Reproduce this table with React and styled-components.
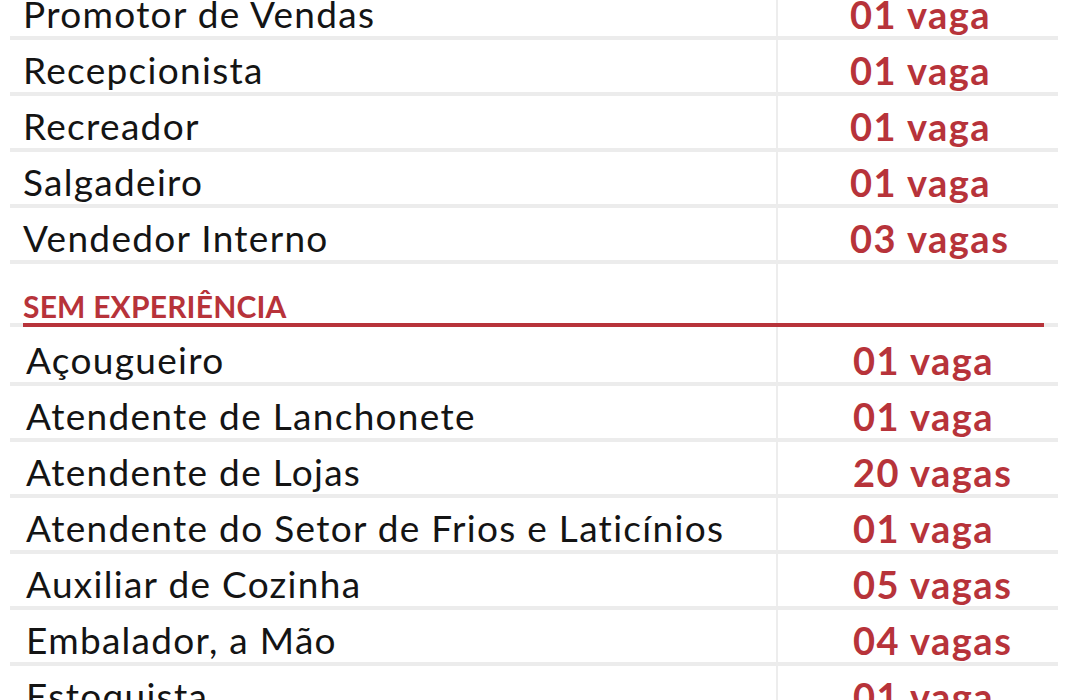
import styled, { createGlobalStyle } from "styled-components";

const Global = createGlobalStyle`
  html, body { margin: 0; padding: 0; background: #fff; overflow: hidden; }
  body { font-family: Lato, "Open Sans", sans-serif; }
`;

const Page = styled.div`
  width: 1080px;
  height: 700px;
  overflow: hidden;
`;

const Table = styled.div`
  margin: -16px 0 0 10px;
  width: 1048px;
  background: linear-gradient(#ededed, #ededed) 766px 0 / 2px 100% no-repeat;
`;

const Section = styled.div`
  padding-top: ${(p) => p.offset || 0}px;
`;

const Row = styled.div`
  display: grid;
  grid-template-columns: ${(p) => 827 - (p.indent || 0) + (p.countIndent || 0)}px 1fr;
  height: 56px;
  box-sizing: border-box;
  padding: 12px 0 4px ${(p) => 13 + (p.indent || 0)}px;
  border-bottom: 4px solid #ececec;
`;

const Job = styled.div`
  font-size: 37px;
  line-height: 36px;
  color: #141414;
  letter-spacing: 1.3px;
  white-space: nowrap;
`;

const Count = styled.div`
  font-size: 38px;
  line-height: 36px;
  font-weight: 700;
  color: #b7333a;
  letter-spacing: 1.5px;
  white-space: nowrap;
`;

const Heading = styled.div`
  height: 62.5px;
  box-sizing: border-box;
  padding: 0 14px 0 13px;
  display: flex;
  align-items: flex-end;
  background: linear-gradient(#ececec, #ececec) 0 100% / 100% 4px no-repeat;
`;

const HeadingText = styled.div`
  flex: 1;
  font-size: 30px;
  line-height: 26px;
  font-weight: 700;
  color: #b7333a;
  letter-spacing: 0.2px;
  padding-bottom: 4px;
  border-bottom: 4px solid #b7333a;
`;

const comExperiencia = [
  ["Promotor de Vendas", "01 vaga"],
  ["Recepcionista", "01 vaga"],
  ["Recreador", "01 vaga"],
  ["Salgadeiro", "01 vaga"],
  ["Vendedor Interno", "03 vagas"],
];

const semExperiencia = [
  ["Açougueiro", "01 vaga"],
  ["Atendente de Lanchonete", "01 vaga"],
  ["Atendente de Lojas", "20 vagas"],
  ["Atendente do Setor de Frios e Laticínios", "01 vaga"],
  ["Auxiliar de Cozinha", "05 vagas"],
  ["Embalador, a Mão", "04 vagas"],
  ["Estoquista", "01 vaga"],
];

export default function App() {
  return (
    <Page>
      <Global />
      <Table>
        <Section>
          {comExperiencia.map(([job, n]) => (
            <Row key={job}>
              <Job>{job}</Job>
              <Count>{n}</Count>
            </Row>
          ))}
        </Section>
        <Heading>
          <HeadingText>SEM EXPERIÊNCIA</HeadingText>
        </Heading>
        <Section offset={3}>
          {semExperiencia.map(([job, n]) => (
            <Row key={job} indent={3} countIndent={3}>
              <Job>{job}</Job>
              <Count>{n}</Count>
            </Row>
          ))}
        </Section>
      </Table>
    </Page>
  );
}
